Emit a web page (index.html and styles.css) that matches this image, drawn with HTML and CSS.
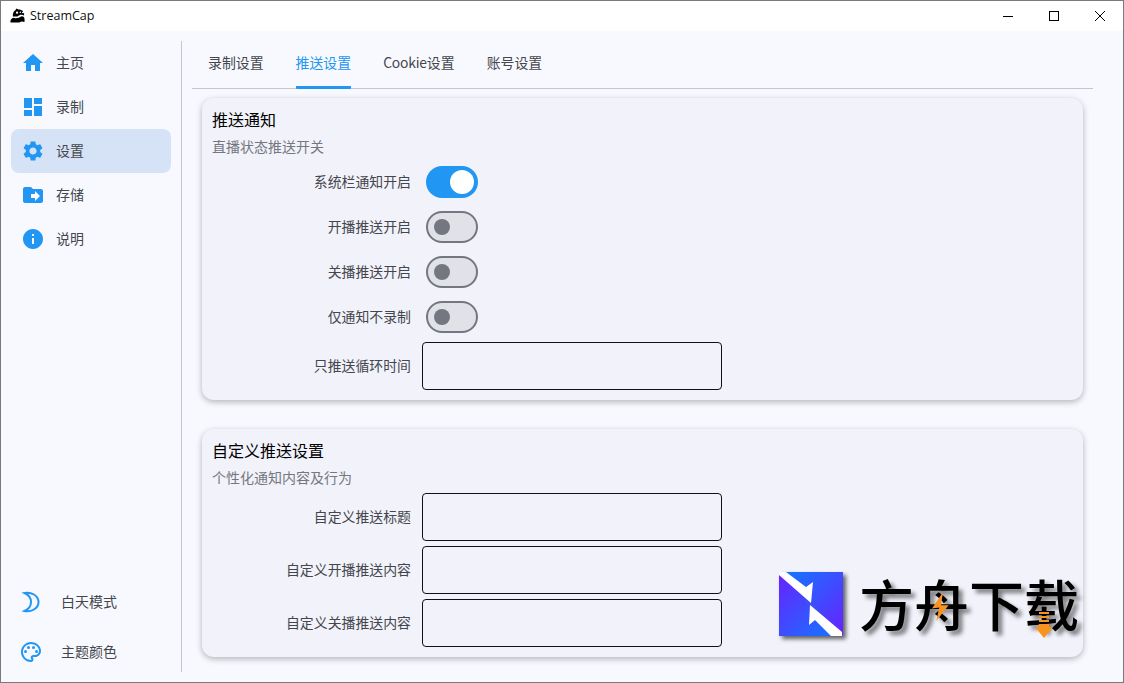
FILE: index.html
```html
<!DOCTYPE html>
<html lang="zh">
<head>
<meta charset="utf-8">
<title>StreamCap</title>
<link rel="stylesheet" href="styles.css">
</head>
<body>
<div class="window">
  <header class="titlebar">
    <div class="brand">
      <svg class="brand-icon" viewBox="0 0 16 16"><path d="M3 9C2.800 6 3.800 3.500 6 2.200L6.800.6 9 1.500c2 0 3.800.6 5 2l-1.400 1.300c.5 1 1.700 1.100 2.400.2V8c-2.500-1.400-4.800-.6-7 1z" fill="#000"/><circle cx="7.500" cy="5" r="1.200" fill="#fff"/><circle cx="11" cy="4.400" r=".8" fill="#fff"/><path d="M.5 15.500C0 13 1.500 11 4 10.500c3 1 6-.5 8-1.500 2-.5 3.500 1 3.500 3v3c-2.500-1-3.500-1-5.500 .5z" fill="#000"/></svg>
      <span>StreamCap</span>
    </div>
    <div class="controls">
      <svg class="ctl" viewBox="0 0 46 30"><path d="M18 15.500h10" stroke="#000" fill="none"/></svg>
      <svg class="ctl" viewBox="0 0 46 30"><rect x="18.500" y="10.500" width="9" height="9" stroke="#000" fill="none"/></svg>
      <svg class="ctl" viewBox="0 0 46 30"><path d="M18 10l10 10M28 10L18 20" stroke="#000" fill="none"/></svg>
    </div>
  </header>
  <div class="main">
    <aside class="sidebar">
      <nav class="nav">
        <a class="nav-item"><svg class="icon" viewBox="0 0 24 24"><path d="M10 20v-6h4v6h5v-8h3L12 3 2 12h3v8z"/></svg><span>主页</span></a>
        <a class="nav-item"><svg class="icon" viewBox="0 0 24 24"><path d="M3 13h8V3H3v10zm0 8h8v-6H3v6zm10 0h8V11h-8v10zm0-18v6h8V3h-8z"/></svg><span>录制</span></a>
        <a class="nav-item active"><svg class="icon" viewBox="0 0 24 24"><path d="M19.140 12.940c.04-.3.06-.61.06-.94 0-.32-.02-.64-.07-.94l2.030-1.580c.18-.14.23-.41.12-.61l-1.920-3.320c-.12-.22-.37-.29-.59-.22l-2.390.96c-.5-.38-1.030-.7-1.620-.94l-.36-2.540c-.04-.24-.24-.41-.48-.41h-3.840c-.24 0-.43.17-.47.41l-.36 2.540c-.59.24-1.130.57-1.620.94l-2.390-.96c-.22-.08-.47 0-.59.22L2.740 8.870c-.12.21-.08.47.12.61l2.030 1.580c-.05.3-.09.63-.09.94s.02.64.07.94l-2.030 1.580c-.18.14-.23.41-.12.61l1.920 3.320c.12.22.37.29.59.22l2.390-.96c.5.38 1.030.7 1.620.94l.36 2.540c.05.24.24.41.48.41h3.840c.24 0 .44-.17.47-.41l.36-2.540c.59-.24 1.130-.56 1.620-.94l2.390.96c.22.08.47 0 .59-.22l1.920-3.320c.12-.22.07-.47-.12-.61l-2.010-1.580zM12 15.600c-1.980 0-3.600-1.620-3.600-3.600s1.620-3.600 3.600-3.600 3.600 1.620 3.600 3.600-1.620 3.600-3.600 3.600z"/></svg><span>设置</span></a>
        <a class="nav-item"><svg class="icon" viewBox="0 0 24 24"><path d="M20 6h-8l-2-2H4c-1.100 0-1.990.9-1.990 2L2 18c0 1.100.9 2 2 2h16c1.100 0 2-.9 2-2V8c0-1.100-.9-2-2-2zm-6 12v-3h-4v-4h4V8l5 5-5 5z"/></svg><span>存储</span></a>
        <a class="nav-item"><svg class="icon" viewBox="0 0 24 24"><path d="M12 2C6.480 2 2 6.480 2 12s4.480 10 10 10 10-4.480 10-10S17.520 2 12 2zm1 15h-2v-6h2v6zm0-8h-2V7h2v2z"/></svg><span>说明</span></a>
      </nav>
      <div class="side-bottom">
        <a class="side-action"><svg class="icon icon-line" viewBox="0 0 24 24"><path d="M5.500 3C12 1.500 19.500 5.500 19.500 12S12 22.500 5.500 21C10 19 12 15.500 12 12S10 5 5.500 3z"/></svg><span>白天模式</span></a>
        <a class="side-action"><svg class="icon" viewBox="0 0 24 24"><path d="M12 22C6.490 22 2 17.510 2 12S6.490 2 12 2s10 4.040 10 9c0 3.310-2.690 6-6 6h-1.770c-.28 0-.5.22-.5.5 0 .12.05.23.13.33.41.47.64 1.060.64 1.670 0 1.380-1.120 2.500-2.500 2.500zm0-18c-4.410 0-8 3.590-8 8s3.590 8 8 8c.28 0 .5-.22.5-.5 0-.16-.08-.28-.14-.35-.41-.46-.63-1.050-.63-1.650 0-1.380 1.120-2.500 2.500-2.500H16c2.210 0 4-1.790 4-4 0-3.860-3.590-7-8-7z"/><circle cx="6.500" cy="11.500" r="1.500"/><circle cx="9.500" cy="7.500" r="1.500"/><circle cx="14.500" cy="7.500" r="1.500"/><circle cx="17.500" cy="11.500" r="1.500"/></svg><span>主题颜色</span></a>
      </div>
    </aside>
    <section class="content">
      <div class="tabs">
        <a class="tab"><span class="tab-label">录制设置</span></a>
        <a class="tab active"><span class="tab-label">推送设置</span></a>
        <a class="tab"><span class="tab-label"><span class="tab-latin">Cookie</span>设置</span></a>
        <a class="tab"><span class="tab-label">账号设置</span></a>
      </div>
      <div class="cards">
        <div class="card">
          <h2 class="card-title">推送通知</h2>
          <p class="card-sub">直播状态推送开关</p>
          <div class="rows">
            <div class="row"><label class="row-label">系统栏通知开启</label><div class="switch-wrap"><div class="switch on"><i class="thumb"></i></div></div></div>
            <div class="row"><label class="row-label">开播推送开启</label><div class="switch-wrap"><div class="switch"><i class="thumb"></i></div></div></div>
            <div class="row"><label class="row-label">关播推送开启</label><div class="switch-wrap"><div class="switch"><i class="thumb"></i></div></div></div>
            <div class="row"><label class="row-label">仅通知不录制</label><div class="switch-wrap"><div class="switch"><i class="thumb"></i></div></div></div>
            <div class="row"><label class="row-label">只推送循环时间</label><input class="field" type="text"></div>
          </div>
        </div>
        <div class="card">
          <h2 class="card-title">自定义推送设置</h2>
          <p class="card-sub">个性化通知内容及行为</p>
          <div class="rows">
            <div class="row"><label class="row-label">自定义推送标题</label><input class="field" type="text"></div>
            <div class="row"><label class="row-label">自定义开播推送内容</label><input class="field" type="text"></div>
            <div class="row"><label class="row-label">自定义关播推送内容</label><input class="field" type="text"></div>
          </div>
        </div>
      </div>
    </section>
  </div>
  <div class="watermark">
    <svg class="wm-logo" viewBox="0 0 64 64">
      <defs>
        <linearGradient id="g1" x1="0" y1="0" x2="1" y2="1"><stop offset="0" stop-color="#0f7bff"/><stop offset="1" stop-color="#6a20ff"/></linearGradient>
        <linearGradient id="g2" x1="0" y1="0" x2="1" y2="1"><stop offset="0" stop-color="#6a20ff"/><stop offset="1" stop-color="#0f7bff"/></linearGradient>
      </defs>
      <polygon points="0,0 64,0 64,64" fill="url(#g1)"/>
      <polygon points="0,0 64,64 0,64" fill="url(#g2)"/>
      <polygon points="0,3 0,0 7,0 27,15 34,10 32,31" fill="#fff"/>
      <polygon points="31,33 63,60 63,64 52,64 36,48 30,53" fill="#fff"/>
    </svg>
    <span class="wm-text">方舟下载</span>
    <svg class="wm-bolt" viewBox="0 0 17 29"><polygon points="11,0 0,16.600 7.300,15.600 4.300,29 16.600,13.300 9,13.300" fill="#f9931f"/></svg>
    <svg class="wm-arrow" viewBox="0 0 18 26"><path d="M4 0h10v2H4zM4 4h10v2H4zM4 8h10v2H4zM4 12h10v3h4l-9 11-9-11h4z" fill="#f9931f"/></svg>
  </div>
</div>
</body>
</html>
```
FILE: styles.css
```css
* { box-sizing: border-box; }
html, body { margin: 0; padding: 0; }
body {
  font-family: "Noto Sans CJK SC", "Noto Sans", sans-serif;
  font-size: 14px;
  color: #44464c;
}
.window {
  position: relative;
  width: 1124px;
  height: 683px;
  border: 1px solid #7a7a7a;
  background: #f8f9ff;
  overflow: hidden;
  display: flex;
  flex-direction: column;
}
.titlebar {
  height: 30px;
  flex: none;
  background: #fff;
  display: flex;
  align-items: center;
  justify-content: space-between;
}
.brand {
  display: flex;
  align-items: center;
  gap: 5px;
  padding-left: 9px;
  padding-bottom: 2px;
  font-family: "Open Sans", sans-serif;
  font-size: 12.500px;
  color: #111;
}
.brand-icon { width: 15px; height: 15px; }
.controls { display: flex; }
.ctl { width: 46px; height: 30px; display: block; }
.main {
  flex: 1;
  min-height: 0;
  display: flex;
  padding: 10px 0;
}
.sidebar {
  width: 181px;
  flex: none;
  border-right: 1px solid #c4c6cf;
  padding: 0 10px;
  display: flex;
  flex-direction: column;
  justify-content: space-between;
}
.nav { display: flex; flex-direction: column; }
.nav-item {
  height: 44px;
  display: flex;
  align-items: center;
  gap: 11px;
  padding-left: 10px;
  border-radius: 8px;
}
.nav-item span, .side-action span { padding-bottom: 2px; }
.nav-item.active { background: #d6e3f7; }
.icon { width: 24px; height: 24px; fill: #2196f3; flex: none; }
.icon-line { fill: none; stroke: #2196f3; stroke-width: 2; }
.side-bottom { display: flex; flex-direction: column; gap: 10px; }
.side-action {
  height: 40px;
  display: flex;
  align-items: center;
  gap: 18px;
  padding-left: 8px;
}
.content {
  flex: 1;
  min-width: 0;
  margin-left: 10px;
  margin-right: 30px;
  display: flex;
  flex-direction: column;
}
.tabs {
  height: 48px;
  flex: none;
  display: flex;
  align-items: flex-start;
  border-bottom: 1px solid #c4c6cf;
}
.tab { padding: 0 16px; height: 48px; display: block; color: #44464c; font-size: 13.900px; }
.tab-label {
  display: flex;
  align-items: center;
  height: 48px;
  padding-bottom: 3px;
  border-bottom: 3px solid transparent;
  border-radius: 0 0 1px 1px;
}
.tab-latin { letter-spacing: -.2px; }
.tab.active { color: #2196f3; }
.tab.active .tab-label { border-bottom-color: #2196f3; }
.cards {
  margin: 9px 0 0 10px;
  width: 881px;
  display: flex;
  flex-direction: column;
  gap: 29px;
}
.card {
  background: #f1f2fa;
  border-radius: 12px;
  padding: 9px 10px 10px;
  box-shadow: 0 2px 6px rgba(0, 0, 0, .28);
}
.card-title {
  margin: 0;
  font-size: 16px;
  font-weight: 400;
  line-height: 24px;
  color: #000;
}
.card-sub {
  margin: 4px 0 5px;
  font-size: 14px;
  line-height: 22px;
  color: #74777f;
}
.rows { display: flex; flex-direction: column; gap: 5px; }
.row { display: flex; align-items: center; gap: 11px; }
.row-label { width: 199px; padding-bottom: 2px; text-align: right; font-size: 13.900px; color: #44464c; }
.switch-wrap { width: 60px; height: 40px; padding: 4px; }
.switch {
  width: 52px;
  height: 32px;
  border-radius: 16px;
  background: #e1e2e8;
  border: 2px solid #74777f;
  display: flex;
  align-items: center;
  padding-left: 6px;
}
.switch.on {
  background: #2196f3;
  border-color: #2196f3;
  justify-content: flex-end;
  padding: 0 2px 0 0;
}
.thumb { display: block; width: 16px; height: 16px; border-radius: 50%; background: #74777f; }
.switch.on .thumb { width: 24px; height: 24px; background: #fff; }
.field {
  width: 300px;
  height: 48px;
  background: transparent;
  border: 1px solid #111;
  border-radius: 4px;
  padding: 0 12px;
  outline: none;
}
.watermark {
  position: absolute;
  left: 778px;
  top: 571px;
  width: 310px;
  height: 66px;
}
.wm-logo {
  position: absolute;
  left: 0;
  top: 0;
  width: 64px;
  height: 64px;
  filter: drop-shadow(3px 3px 2px rgba(0, 0, 0, .6));
}
.wm-text {
  position: absolute;
  left: 80px;
  top: -6px;
  font-size: 55px;
  line-height: 72px;
  font-weight: 500;
  color: #000;
  white-space: nowrap;
  text-shadow: 4px 4px 4px rgba(0, 0, 0, .5);
}
.wm-bolt { position: absolute; left: 153px; top: 20px; width: 17px; height: 29px; }
.wm-arrow { position: absolute; left: 256px; top: 40px; width: 18px; height: 26px; }
```
